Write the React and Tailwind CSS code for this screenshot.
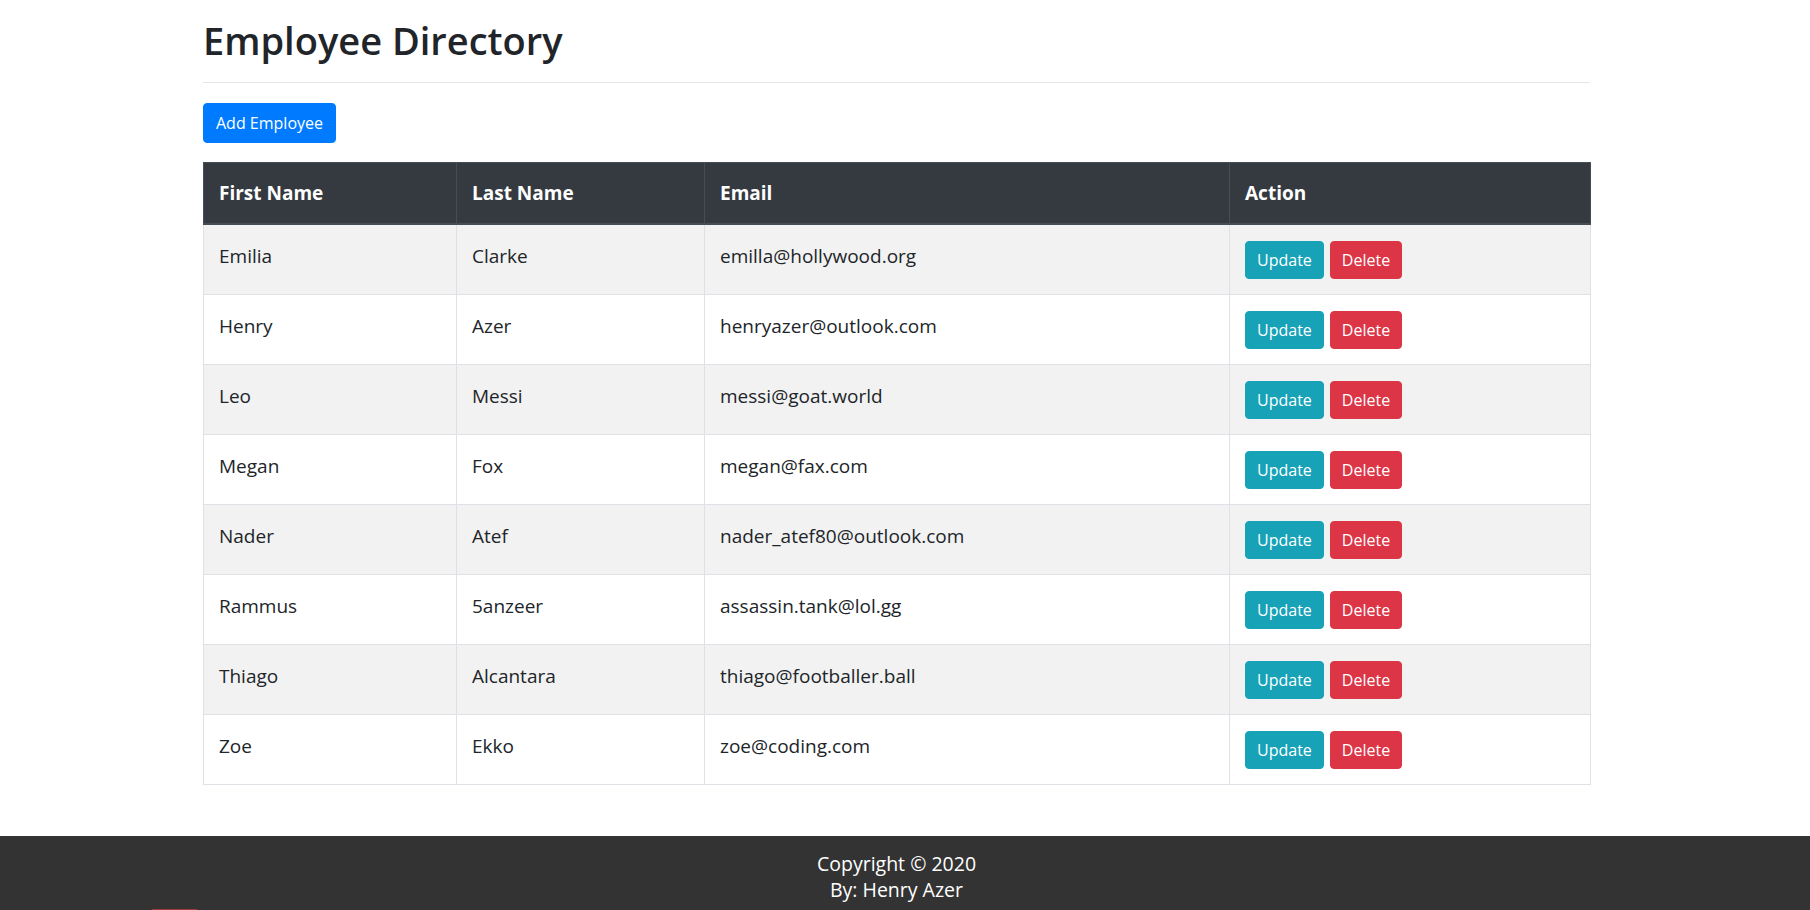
import React from "react";

const employees = [
  { first: "Emilia", last: "Clarke", email: "emilla@hollywood.org" },
  { first: "Henry", last: "Azer", email: "henryazer@outlook.com" },
  { first: "Leo", last: "Messi", email: "messi@goat.world" },
  { first: "Megan", last: "Fox", email: "megan@fax.com" },
  { first: "Nader", last: "Atef", email: "nader_atef80@outlook.com" },
  { first: "Rammus", last: "5anzeer", email: "assassin.tank@lol.gg" },
  { first: "Thiago", last: "Alcantara", email: "thiago@footballer.ball" },
  { first: "Zoe", last: "Ekko", email: "zoe@coding.com" },
];

const App = () => {
  return (
    <div className="min-h-[910px] bg-white text-[#212529] font-['Open_Sans',sans-serif] flex flex-col relative">
      <div className="ml-[203px] w-[1387px] pt-[16px]">
        <h1 className="text-[38px] leading-[48px] font-semibold">Employee Directory</h1>
        <hr className="mt-[18px] mb-[20px] border-t border-[#e6e6e6]" />
        <button className="bg-[#007bff] text-white text-[16px] leading-[24px] px-[12px] py-[7px] rounded-[4px] border border-[#007bff]">
          Add Employee
        </button>

        <table className="mt-[19px] w-full table-fixed border-collapse text-[19px] leading-[30px]">
          <colgroup>
            <col className="w-[253px]" />
            <col className="w-[248px]" />
            <col className="w-[525px]" />
            <col className="w-[361px]" />
          </colgroup>
          <thead className="bg-[#343a40] text-white">
            <tr>
              {["First Name", "Last Name", "Email", "Action"].map((h) => (
                <th
                  key={h}
                  className="text-left font-bold px-[15px] py-[15px] border border-[#454d55] border-b-2"
                >
                  {h}
                </th>
              ))}
            </tr>
          </thead>
          <tbody>
            {employees.map((emp) => (
              <tr key={emp.email} className="odd:bg-[#f2f2f2] bg-white">
                <td className="align-top px-[15px] py-[16px] border border-[#dee2e6]">{emp.first}</td>
                <td className="align-top px-[15px] py-[16px] border border-[#dee2e6]">{emp.last}</td>
                <td className="align-top px-[15px] py-[16px] border border-[#dee2e6]">{emp.email}</td>
                <td className="align-top px-[15px] pt-[16px] pb-[15px] border border-[#dee2e6]">
                  <div className="flex gap-[6px]">
                    <button className="bg-[#17a2b8] text-white text-[16px] leading-[24px] px-[11px] py-[6px] rounded-[4px] border border-[#17a2b8]">
                      Update
                    </button>
                    <button className="bg-[#dc3545] text-white text-[16px] leading-[24px] px-[11px] py-[6px] rounded-[4px] border border-[#dc3545]">
                      Delete
                    </button>
                  </div>
                </td>
              </tr>
            ))}
          </tbody>
        </table>
      </div>

      <footer className="mt-[51px] bg-[#333333] text-white flex-1">
        <div className="w-[1793px] text-center text-[19.5px] leading-[26px] pt-[15px]">
          <p>Copyright © 2020</p>
          <p>By: Henry Azer</p>
        </div>
      </footer>
      <div className="absolute left-[152px] bottom-0 w-[45px] h-[1px] bg-[#a33a3a]" />
    </div>
  );
};

export default App;
